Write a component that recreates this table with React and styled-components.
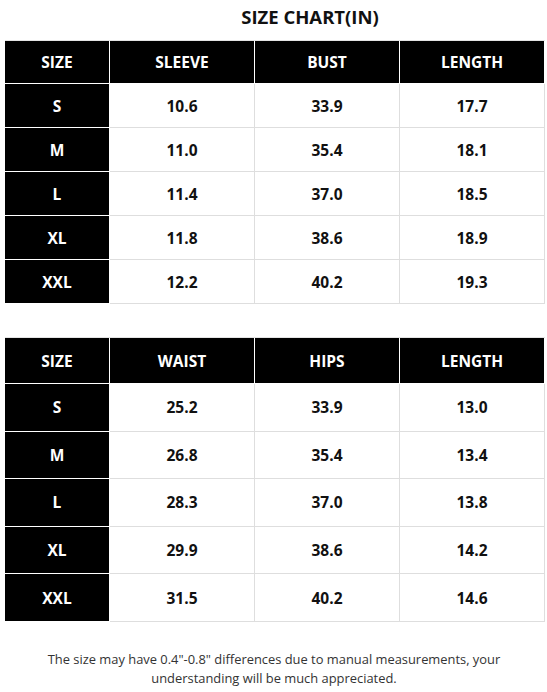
import React from 'react'
import styled, { createGlobalStyle } from 'styled-components'

const GlobalStyle = createGlobalStyle`
  html, body {
    margin: 0;
    padding: 0;
    background: #fff;
  }
  body {
    font-family: "Open Sans", "Noto Sans", "Liberation Sans", sans-serif;
  }
`

const upperChart = {
  head: ['SIZE', 'SLEEVE', 'BUST', 'LENGTH'],
  rows: [
    ['S', '10.6', '33.9', '17.7'],
    ['M', '11.0', '35.4', '18.1'],
    ['L', '11.4', '37.0', '18.5'],
    ['XL', '11.8', '38.6', '18.9'],
    ['XXL', '12.2', '40.2', '19.3'],
  ],
}

const lowerChart = {
  head: ['SIZE', 'WAIST', 'HIPS', 'LENGTH'],
  rows: [
    ['S', '25.2', '33.9', '13.0'],
    ['M', '26.8', '35.4', '13.4'],
    ['L', '28.3', '37.0', '13.8'],
    ['XL', '29.9', '38.6', '14.2'],
    ['XXL', '31.5', '40.2', '14.6'],
  ],
}

const SizeTable = ({ chart, headHeight, rowHeight }) => {
  return (
    <StyledTable>
      {chart.head.map((h) => (
        <Cell key={h} dark height={headHeight}>
          {h}
        </Cell>
      ))}
      {chart.rows.map((row) =>
        row.map((value, i) => (
          <Cell key={row[0] + i} dark={i === 0} height={rowHeight}>
            {value}
          </Cell>
        ))
      )}
    </StyledTable>
  )
}

const App = () => {
  return (
    <Page>
      <GlobalStyle />
      <Title>SIZE CHART(IN)</Title>
      <SizeTable chart={upperChart} headHeight={43} rowHeight={44} />
      <Spacer />
      <SizeTable chart={lowerChart} headHeight={46} rowHeight={47.6} />
      <Note>
        The size may have 0.4"-0.8" differences due to manual measurements, your
        <br />
        understanding will be much appreciated.
      </Note>
    </Page>
  )
}

const Page = styled.div`
  width: 547px;
  height: 692px;
  padding: 0 2px 0 5px;
  box-sizing: border-box;
  display: flex;
  flex-direction: column;
`

const Title = styled.h1`
  margin: 6px 0 0;
  height: 34px;
  padding-left: 70px;
  text-align: center;
  font-size: 18.5px;
  font-weight: 700;
  color: #111;
  line-height: 22px;
`

const StyledTable = styled.div`
  display: grid;
  grid-template-columns: 105px 145px 145px 145px;
  width: 540px;
  border-top: 1px solid #e4e4e4;
`

const Cell = styled.div`
  height: ${({ height }) => height}px;
  box-sizing: border-box;
  display: flex;
  align-items: center;
  justify-content: center;
  font-size: 15.5px;
  font-weight: 700;
  background: ${({ dark }) => (dark ? '#000' : '#fff')};
  color: ${({ dark }) => (dark ? '#fff' : '#111')};
  border-right: 1px solid ${({ dark }) => (dark ? '#fff' : '#dedede')};
  border-bottom: 1px solid ${({ dark }) => (dark ? '#fff' : '#dedede')};
`

const Spacer = styled.div`
  height: 33px;
`

const Note = styled.p`
  margin: 28px 0 0;
  text-align: center;
  font-size: 12.9px;
  line-height: 19px;
  color: #333;
  padding-right: 2px;
`

export default App
